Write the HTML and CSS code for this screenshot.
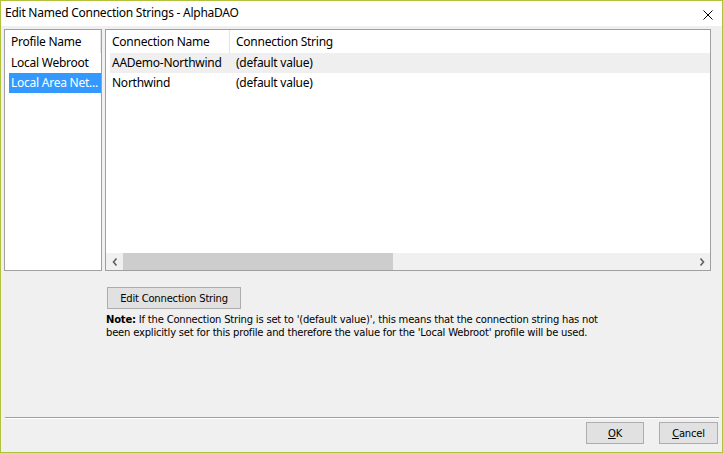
FILE: index.html
```html
<!DOCTYPE html>
<html>
<head>
<meta charset="utf-8">
<title>Edit Named Connection Strings - AlphaDAO</title>
<link rel="stylesheet" href="styles.css">
</head>
<body>
<div class="window">
  <div class="titlebar">
    <span class="title">Edit Named Connection Strings - AlphaDAO</span>
    <svg class="close" width="10" height="10" viewBox="0 0 10 10">
      <path d="M0.5 0.5 L9.5 9.5 M9.5 0.5 L0.5 9.5" stroke="#000" stroke-width="1" fill="none"/>
    </svg>
  </div>
  <div class="client">
    <div class="lists">
      <div class="listview profiles">
        <div class="lv-header">
          <div class="col col-profile">Profile Name</div>
        </div>
        <div class="lv-row"><span class="cell cell-profile">Local Webroot</span></div>
        <div class="lv-row selected"><span class="cell cell-profile" title="Local Area Network">Local Area Net...</span></div>
      </div>
      <div class="listview connections">
        <div class="lv-header">
          <div class="col col-name">Connection Name</div>
          <div class="col col-string">Connection String</div>
        </div>
        <div class="lv-body">
          <div class="lv-row hot"><span class="cell cell-name">AADemo-Northwind</span><span class="cell">(default value)</span></div>
          <div class="lv-row"><span class="cell cell-name">Northwind</span><span class="cell">(default value)</span></div>
        </div>
        <div class="hscroll">
          <div class="arrow">
            <svg width="6" height="8" viewBox="0 0 6 8"><path d="M4.5 0.5 L1.5 4 L4.5 7.5" stroke="#606060" stroke-width="1.6" fill="none"/></svg>
          </div>
          <div class="track"><div class="thumb"></div></div>
          <div class="arrow">
            <svg width="6" height="8" viewBox="0 0 6 8"><path d="M1.5 0.5 L4.5 4 L1.5 7.5" stroke="#606060" stroke-width="1.6" fill="none"/></svg>
          </div>
        </div>
      </div>
    </div>
    <div class="actions">
      <button class="btn btn-edit">Edit Connection String</button>
      <p class="note"><b>Note:</b> If the Connection String is set to '(default value)', this means that the connection string has not<br>been explicitly set for this profile and therefore the value for the 'Local Webroot' profile will be used.</p>
    </div>
    <div class="footer">
      <button class="btn btn-ok"><u>O</u>K</button>
      <button class="btn btn-cancel"><u>C</u>ancel</button>
    </div>
  </div>
</div>
</body>
</html>
```
FILE: styles.css
```css
html, body {
  margin: 0;
  padding: 0;
}

body {
  width: 723px;
  height: 453px;
  overflow: hidden;
  font-family: "Noto Sans", "Open Sans", sans-serif;
  font-size: 12px;
  letter-spacing: -0.25px;
  color: #000;
}

.window {
  box-sizing: border-box;
  width: 723px;
  height: 453px;
  border: 1px solid #b2c13c;
  display: flex;
  flex-direction: column;
  background: #f0f0f0;
}

.titlebar {
  height: 25px;
  flex: none;
  background: #fff;
  display: flex;
  align-items: center;
  padding: 0 9px 0 4px;
}

.title {
  flex: 1;
  font-size: 12px;
  line-height: 16px;
  padding-bottom: 2px;
  white-space: nowrap;
}

.close {
  display: block;
  margin-top: 3px;
}

.client {
  flex: 1;
  display: flex;
  flex-direction: column;
  min-height: 0;
}

.lists {
  display: flex;
  gap: 3px;
  margin: 3px 0 0 3px;
  height: 242px;
}

.listview {
  box-sizing: border-box;
  height: 242px;
  border: 1px solid #a0a0a0;
  background: #fff;
  display: flex;
  flex-direction: column;
}

.profiles {
  width: 98px;
}

.connections {
  width: 606px;
}

.lv-header {
  display: flex;
  height: 23px;
  flex: none;
  line-height: 24px;
}

.col {
  box-sizing: border-box;
  padding-left: 6px;
  border-right: 1px solid #e5e5e5;
  white-space: nowrap;
}

.col-profile {
  width: 96px;
}

.col-name {
  width: 124px;
}

.col-string {
  width: 130px;
  border-right: none;
}

.lv-body {
  flex: 1;
}

.lv-row {
  display: flex;
  height: 20px;
  line-height: 20px;
  margin-left: 4px;
  padding-left: 2px;
  white-space: nowrap;
}

.lv-row.hot {
  background: #efefef;
}

.lv-row.selected {
  background: #3399ff;
  color: #fff;
}

.cell {
  display: block;
  white-space: nowrap;
}

.cell-profile {
  width: 89px;
}

.cell-name {
  width: 124px;
}

.hscroll {
  height: 17px;
  flex: none;
  display: flex;
  background: #f0f0f0;
}

.arrow {
  width: 17px;
  height: 17px;
  display: flex;
  align-items: center;
  justify-content: center;
}

.track {
  flex: 1;
  display: flex;
  align-items: stretch;
}

.thumb {
  width: 270px;
  background: #cdcdcd;
}

.actions {
  margin: 16px 0 0 105px;
}

.btn {
  box-sizing: border-box;
  height: 22px;
  border: 1px solid #adadad;
  background: #e1e1e1;
  font-family: "DejaVu Sans", sans-serif;
  font-size: 10px;
  letter-spacing: -0.2px;
  color: #000;
  padding: 0;
  margin: 0;
}

.btn-edit {
  width: 134px;
  margin-left: 1px;
}

.note {
  margin: 4px 0 0 0;
  font-family: "DejaVu Sans", sans-serif;
  font-size: 10px;
  letter-spacing: -0.2px;
  line-height: 13px;
}

.footer {
  margin: auto 3px 0 4px;
  border-top: 1px solid #a0a0a0;
  box-shadow: inset 0 1px 0 #fff;
  padding: 4px 1px 8px 0;
  display: flex;
  justify-content: flex-end;
  gap: 15px;
}

.btn-ok {
  width: 58px;
}

.btn-cancel {
  width: 59px;
}
```
